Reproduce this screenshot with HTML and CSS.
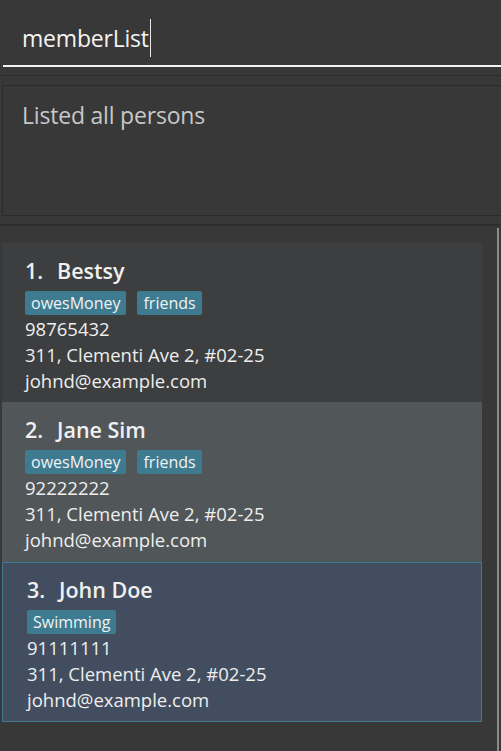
FILE: index.html
```html
<!DOCTYPE html>
<html>
<head>
<meta charset="utf-8">
<link rel="stylesheet" href="styles.css">
</head>
<body>
<div class="app">
  <div class="command">
    <span class="command-text">memberList</span><span class="caret"></span>
  </div>
  <div class="divider"></div>
  <div class="result">Listed all persons</div>
  <div class="divider divider-low"></div>
  <div class="list-pane">
    <div class="list">
      <div class="card card-first">
        <div class="name"><span class="idx">1.</span>Bestsy</div>
        <div class="tags"><span class="tag">owesMoney</span><span class="tag">friends</span></div>
        <div class="line">98765432</div>
        <div class="line">311, Clementi Ave 2, #02-25</div>
        <div class="line">johnd@example.com</div>
      </div>
      <div class="card card-alt">
        <div class="name"><span class="idx">2.</span>Jane Sim</div>
        <div class="tags"><span class="tag">owesMoney</span><span class="tag">friends</span></div>
        <div class="line">92222222</div>
        <div class="line">311, Clementi Ave 2, #02-25</div>
        <div class="line">johnd@example.com</div>
      </div>
      <div class="card card-selected">
        <div class="name"><span class="idx">3.</span>John Doe</div>
        <div class="tags"><span class="tag">Swimming</span></div>
        <div class="line">91111111</div>
        <div class="line">311, Clementi Ave 2, #02-25</div>
        <div class="line">johnd@example.com</div>
      </div>
    </div>
    <div class="scrollbar"></div>
  </div>
</div>
</body>
</html>
```
FILE: styles.css
```css
html, body {
  margin: 0;
  padding: 0;
  background: #383838;
}
body {
  font-family: "Open Sans", "Noto Sans", "Liberation Sans", sans-serif;
  color: #ffffff;
  width: 501px;
  height: 751px;
  overflow: hidden;
}
.app {
  display: flex;
  flex-direction: column;
  height: 751px;
}
.command {
  margin-left: 3px;
  border-bottom: 2px solid #f2f2f2;
  display: flex;
  align-items: center;
  padding-left: 19px;
  padding-top: 10px;
  box-sizing: border-box;
  height: 67px;
}
.command-text {
  font-size: 23px;
  color: #f4f4f4;
  letter-spacing: -0.2px;
  line-height: 30px;
}
.caret {
  width: 1px;
  height: 38px;
  background: #e8e8e8;
  margin-left: 1px;
}
.divider {
  height: 18px;
  box-sizing: border-box;
  border-top: 8px solid #383838;
  border-bottom: 9px solid #383838;
  background: #2c2c2c;
}
.result {
  height: 131px;
  margin-left: 2px;
  border: 1px solid #2b2b2b;
  border-right: none;
  box-sizing: border-box;
  padding: 13px 0 0 19px;
  font-size: 23px;
  color: #c8c8c8;
  letter-spacing: -0.2px;
}
.divider-low {
  height: 12px;
  border-top: 8px solid #383838;
  border-bottom: 2px solid #383838;
}
.list-pane {
  flex: 1;
  display: flex;
  padding-top: 15px;
}
.list {
  width: 480px;
  margin-left: 2px;
  display: flex;
  flex-direction: column;
}
.scrollbar {
  width: 2px;
  margin-left: 15px;
  margin-top: -15px;
  background: #8a8a8a;
}
.card {
  height: 160px;
  box-sizing: border-box;
  background: #3c3e3f;
  padding: 13px 0 0 23px;
}
.card-first {
  height: 159px;
}
.card-alt {
  background: #515658;
}
.card-selected {
  background: #424d5f;
  border: 1px solid #3e7b91;
  padding: 12px 0 0 24px;
}
.name {
  font-size: 21.5px;
  font-weight: 600;
  line-height: 30px;
  color: #f0f0f0;
}
.idx {
  display: inline-block;
  width: 32px;
}
.tags {
  display: flex;
  gap: 11px;
  margin-top: 5px;
  margin-bottom: 1px;
}
.tag {
  background: #3e7b91;
  color: #f2f2f2;
  font-size: 16px;
  line-height: 24px;
  padding: 0 6px;
  border-radius: 2px;
}
.line {
  font-size: 18.5px;
  line-height: 26px;
  color: #eeeeee;
}
```
